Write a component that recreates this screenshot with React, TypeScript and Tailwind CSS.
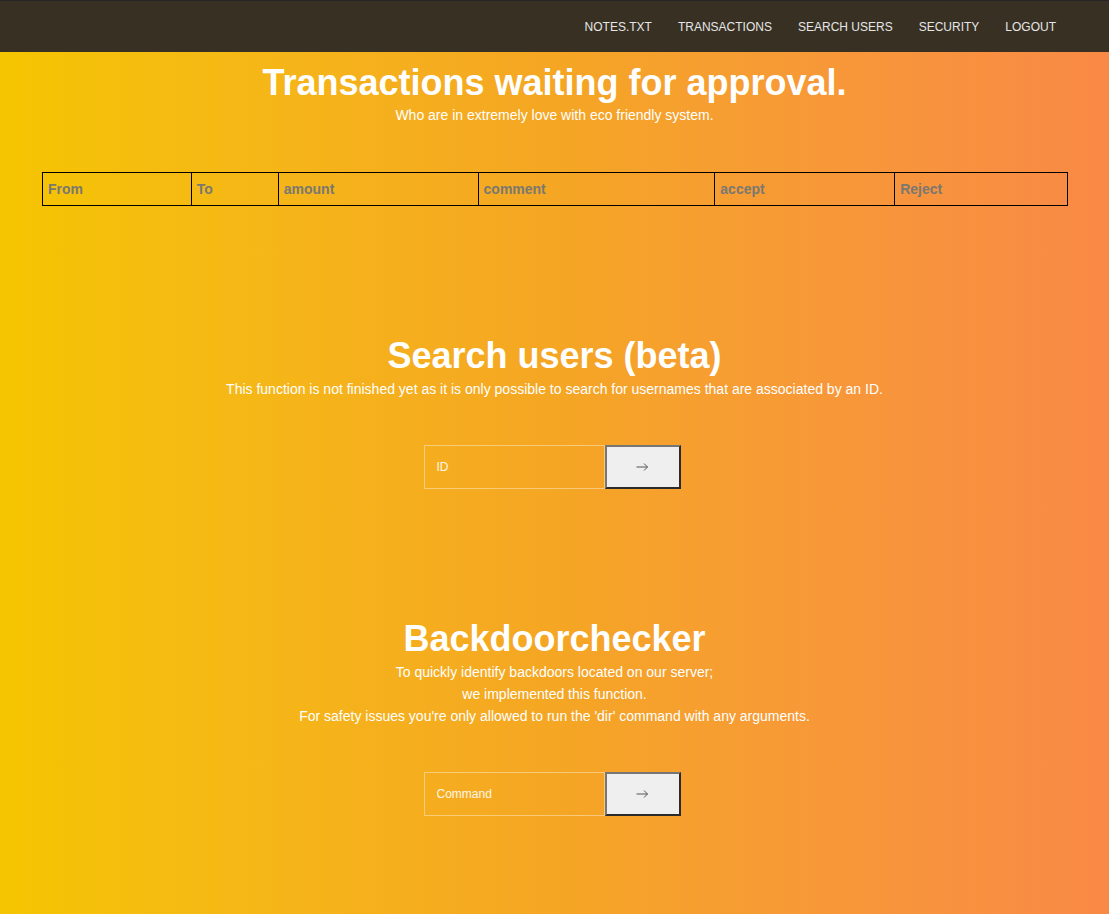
const links = ["NOTES.TXT", "TRANSACTIONS", "SEARCH USERS", "SECURITY", "LOGOUT"];

const columns = [
  { label: "From", w: "w-[149px]" },
  { label: "To", w: "w-[87px]" },
  { label: "amount", w: "w-[200px]" },
  { label: "comment", w: "w-[237px]" },
  { label: "accept", w: "w-[180px]" },
  { label: "Reject", w: "w-[173px]" },
];

const InputRow = ({ placeholder }: { placeholder: string }) => (
  <div className="flex justify-center pr-[5px]">
    <input
      placeholder={placeholder}
      className="w-[181px] h-[44px] border border-white/40 bg-transparent px-[12px] text-[12px] text-white placeholder:text-white/90 outline-none"
    />
    <button className="w-[76px] h-[44px] bg-[#efefef] border-2 border-t-[#767676] border-l-[#767676] border-b-[#2b2b2b] border-r-[#2b2b2b] flex items-center justify-center">
      <svg width="13" height="10" viewBox="0 0 13 10" fill="none" stroke="#555" strokeWidth="1">
        <path d="M0.5 5h11M8 1.5l3.5 3.5L8 8.5" />
      </svg>
    </button>
  </div>
);

const App = () => {
  return (
    <div className="min-h-screen bg-gradient-to-r from-[#f5c500] via-[#f5a623] to-[#f98946] font-['Liberation_Sans',Arial,sans-serif] text-white">
      <nav className="h-[52px] bg-[#373023] border-t border-[#262626] flex justify-end items-center pr-[40px]">
        {links.map((l) => (
          <a key={l} className="px-[13px] pt-[1px] text-[12px] text-[#e6e6e6] cursor-pointer">
            {l}
          </a>
        ))}
      </nav>

      <section className="text-center pt-[10px]">
        <h1 className="text-[36px] font-bold leading-[41px] mb-[1px]">Transactions waiting for approval.</h1>
        <p className="text-[14px] leading-[22px]">Who are in extremely love with eco friendly system.</p>
      </section>

      <div className="px-[42px] mt-[46px]">
        <table className="w-[1026px] border-collapse border border-black">
          <thead>
            <tr>
              {columns.map((c) => (
                <th
                  key={c.label}
                  className={`${c.w} h-[33px] border border-black text-left font-bold text-[14px] text-[#7a7870] pl-[5px]`}
                >
                  {c.label}
                </th>
              ))}
            </tr>
          </thead>
        </table>
      </div>

      <section className="text-center mt-[129px]">
        <h1 className="text-[36px] font-bold leading-[41px] mb-[2px]">Search users (beta)</h1>
        <p className="text-[14px] leading-[22px]">
          This function is not finished yet as it is only possible to search for usernames that are associated by an ID.
        </p>
        <div className="mt-[45px]">
          <InputRow placeholder="ID" />
        </div>
      </section>

      <section className="text-center mt-[129px] pb-[98px]">
        <h1 className="text-[36px] font-bold leading-[41px] mb-[2px]">Backdoorchecker</h1>
        <p className="text-[14px] leading-[22px]">To quickly identify backdoors located on our server;</p>
        <p className="text-[14px] leading-[22px]">we implemented this function.</p>
        <p className="text-[14px] leading-[22px]">
          For safety issues you're only allowed to run the 'dir' command with any arguments.
        </p>
        <div className="mt-[45px]">
          <InputRow placeholder="Command" />
        </div>
      </section>
    </div>
  );
};

export default App;
